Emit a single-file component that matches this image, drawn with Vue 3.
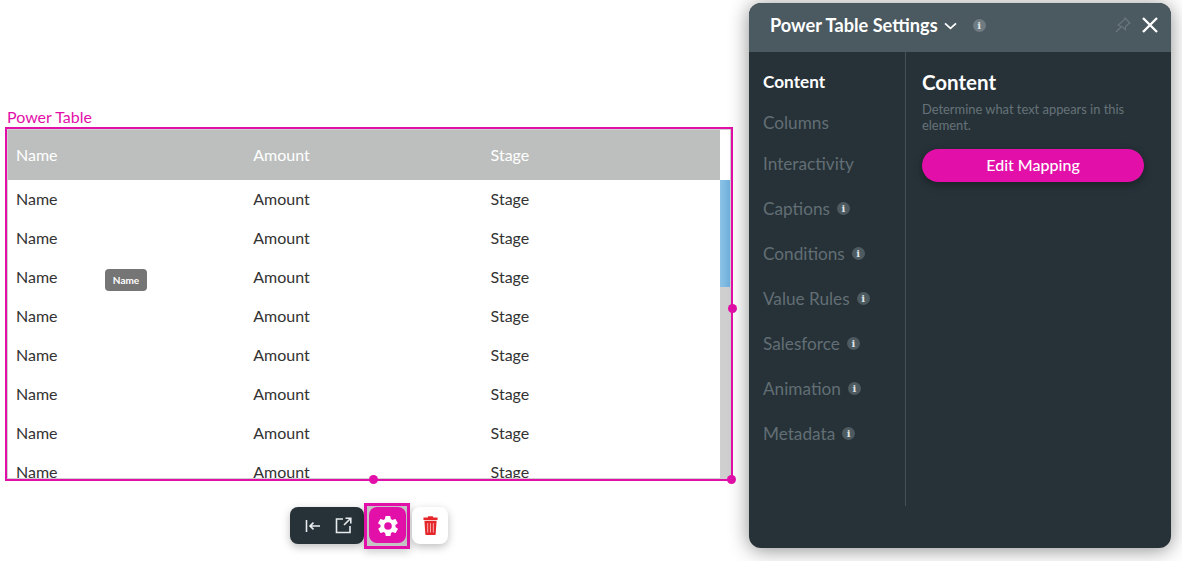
<script setup>
const rows = Array.from({ length: 8 })
const nav = [
  { label: 'Columns', info: false, h: 41 },
  { label: 'Interactivity', info: false, h: 41 },
  { label: 'Captions', info: true, h: 45 },
  { label: 'Conditions', info: true, h: 45 },
  { label: 'Value Rules', info: true, h: 45 },
  { label: 'Salesforce', info: true, h: 45 },
  { label: 'Animation', info: true, h: 45 },
  { label: 'Metadata', info: true, h: 45 },
]
</script>

<template>
  <div class="canvas">
    <div class="element">
      <div class="element-label">Power Table</div>
      <div class="frame">
        <div class="table-area">
          <div class="thead">
            <span class="cell">Name</span><span class="cell">Amount</span><span class="cell">Stage</span>
          </div>
          <div class="tbody">
            <div v-for="(r, i) in rows" :key="i" class="row">
              <span class="cell">Name</span><span class="cell">Amount</span><span class="cell">Stage</span>
            </div>
          </div>
        </div>
        <div class="scroll">
          <div class="scroll-gap"></div>
          <div class="scroll-track"><div class="scroll-thumb"></div></div>
        </div>
        <span class="tip">Name</span>
      </div>
      <span class="handle h-right"></span>
      <span class="handle h-bottom"></span>
      <span class="handle h-corner"></span>
    </div>

    <div class="toolbar">
      <div class="tool-dark">
        <svg width="16" height="14" viewBox="0 0 16 14" fill="none" stroke="#e8ecee" stroke-width="1.6">
          <path d="M1.5 1v12M15 7H5M8.500 3.700 5 7l3.500 3.300" />
        </svg>
        <svg width="17" height="17" viewBox="0 0 17 17" fill="none" stroke="#e8ecee" stroke-width="1.6">
          <path d="M8 2H1.500v13.500H15V9M9 8l6.500-6.500M10.500 1.200h5.300v5.300" />
        </svg>
      </div>
      <div class="tool-gear-wrap">
        <div class="tool-gear">
          <svg class="gear" width="24" height="24" viewBox="0 0 24 24" fill="#fff">
            <path fill-rule="evenodd" d="M19.400 13c.1-.3.100-.7.100-1s0-.7-.1-1l2.100-1.600c.2-.2.200-.4.100-.6l-2-3.500c-.1-.2-.4-.3-.6-.2l-2.500 1c-.5-.4-1.100-.7-1.700-1l-.4-2.700c0-.2-.3-.4-.5-.4h-4c-.2 0-.5.200-.5.400l-.4 2.700c-.6.300-1.200.6-1.700 1l-2.500-1c-.2-.1-.5 0-.6.200l-2 3.500c-.1.200-.1.400.1.600L4.600 11c-.1.300-.1.700-.1 1s0 .7.100 1l-2.100 1.600c-.2.200-.2.400-.1.600l2 3.500c.1.200.4.300.6.200l2.500-1c.5.400 1.100.7 1.700 1l.4 2.700c0 .2.300.4.500.4h4c.2 0 .5-.2.500-.4l.4-2.700c.6-.3 1.200-.6 1.700-1l2.500 1c.2.100.5 0 .6-.2l2-3.500c.1-.2.100-.4-.1-.6L19.400 13zM12 15.800a3.800 3.800 0 1 1 0-7.600 3.800 3.800 0 0 1 0 7.600z" />
          </svg>
        </div>
      </div>
      <div class="tool-trash">
        <svg width="15" height="19" viewBox="0 0 16 20">
          <path fill="#e5262b" d="M5.500 0h5l.5 1.500h4.500V4H.5V1.500H5zM1.500 5h13l-1 14.200c0 .5-.4.800-.9.800H3.400c-.5 0-.9-.3-.9-.8z" />
          <path stroke="#f7b5b5" stroke-width="1" d="M5 7.500v10M8 7.500v10M11 7.500v10" />
        </svg>
      </div>
    </div>

    <aside class="panel">
      <header class="panel-head">
        <span class="panel-title">Power Table Settings</span>
        <svg class="chev" width="13" height="8" viewBox="0 0 13 8" fill="none" stroke="#fff" stroke-width="1.800"><path d="M1 1.300l5.500 5 5.500-5" /></svg>
        <span class="info head-info">i</span>
        <span class="head-spacer"></span>
        <svg class="pin" width="16" height="16" viewBox="0 0 16 16" fill="none" stroke="#6a777d" stroke-width="1.200">
          <path d="M10 1l5 5-1.300.5-3 3-.4 3.200L7.800 10.200 3.300 8.200l-.1-.1L6.500 5.300l3-3zM6 10l-5 5" />
        </svg>
        <svg class="close" width="16" height="16" viewBox="0 0 16 16" fill="none" stroke="#fff" stroke-width="2.400"><path d="M1 1l14 14M15 1L1 15" /></svg>
      </header>
      <div class="panel-body">
        <nav class="side">
          <div class="nav-active">Content</div>
          <div v-for="n in nav" :key="n.label" class="nav-item" :style="{ height: n.h + 'px' }">
            <span>{{ n.label }}</span>
            <span v-if="n.info" class="info">i</span>
          </div>
        </nav>
        <section class="main">
          <h2>Content</h2>
          <p>Determine what text appears in this element.</p>
          <button class="btn">Edit Mapping</button>
        </section>
      </div>
    </aside>
  </div>
</template>

<style>
html, body { margin: 0; background: #fff; overflow: hidden; }
</style>

<style scoped>
.canvas {
  position: relative;
  width: 1182px;
  height: 561px;
  overflow: hidden;
  background: #fff;
  font-family: Lato, sans-serif;
}
.element {
  position: absolute;
  left: 5px;
  top: 127px;
  width: 728px;
  height: 354px;
}
.element-label {
  position: absolute;
  left: 2px;
  top: -20px;
  color: #e30fa9;
  font-size: 16px;
  line-height: 19px;
}
.frame {
  box-sizing: border-box;
  width: 100%;
  height: 100%;
  border: 2px solid #e30fa9;
  display: flex;
  position: relative;
  overflow: hidden;
  padding: 1px;
  box-shadow: inset 0 0 0 1px #cfcfcf;
}
.table-area {
  width: 712px;
  overflow: hidden;
}
.thead {
  height: 50px;
  padding-bottom: 2px;
  box-sizing: border-box;
  background: #bdbfbe;
  color: #fff;
  display: flex;
  align-items: center;
}
.cell {
  width: 237.300px;
  padding-left: 8px;
  box-sizing: border-box;
  flex: none;
  font-size: 16px;
}
.tbody {
  color: #333;
}
.row {
  height: 39px;
  display: flex;
  align-items: center;
  padding-bottom: 2px;
  box-sizing: border-box;
}
.scroll {
  width: 10px;
  display: flex;
  flex-direction: column;
}
.scroll-gap {
  height: 50px;
  flex: none;
}
.scroll-track {
  flex: 1;
  background: #cfcfcf;
}
.scroll-thumb {
  height: 107px;
  background: linear-gradient(90deg, #8cc2e6, #6fb0dc);
}
.tip {
  position: absolute;
  left: 98px;
  top: 140px;
  width: 42px;
  height: 22px;
  border-radius: 4px;
  background: #757575;
  color: #fff;
  font-size: 10px;
  font-weight: 700;
  line-height: 23px;
  text-align: center;
}
.handle {
  position: absolute;
  width: 9px;
  height: 9px;
  border-radius: 50%;
  background: #e30fa9;
}
.h-right { left: 723px; top: 177px; }
.h-bottom { left: 364px; top: 348px; }
.h-corner { left: 722px; top: 348px; }

.toolbar {
  position: absolute;
  left: 290px;
  top: 503px;
  display: flex;
  align-items: flex-start;
}
.tool-dark {
  width: 74px;
  height: 37px;
  margin-top: 4px;
  background: #263238;
  border-radius: 8px;
  display: flex;
  align-items: center;
  justify-content: center;
  gap: 14px;
  box-sizing: border-box;
  padding-left: 3px;
  box-shadow: 0 3px 8px rgba(0, 0, 0, .25);
}
.tool-gear-wrap {
  box-sizing: border-box;
  width: 46px;
  height: 46px;
  border: 3px solid #e30fa9;
  background: #c4c4c4;
  padding: 1px 2px 2px;
  box-shadow: 0 3px 8px rgba(0, 0, 0, .2);
}
.tool-gear {
  width: 37px;
  height: 36px;
  border-radius: 8px;
  background: #e30fa9;
  display: flex;
  align-items: center;
  justify-content: center;
}
.gear { margin-top: 1px; }
.tool-trash {
  width: 36px;
  height: 37px;
  margin: 4px 0 0 2px;
  background: #fff;
  border-radius: 8px;
  display: flex;
  align-items: center;
  justify-content: center;
  box-shadow: 0 3px 8px rgba(0, 0, 0, .25);
}

.panel {
  position: absolute;
  left: 749px;
  top: 3px;
  width: 422px;
  height: 545px;
  border-radius: 12px;
  background: #263238;
  overflow: hidden;
  box-shadow: 0 2px 20px rgba(0, 0, 0, .45);
  display: flex;
  flex-direction: column;
}
.panel-head {
  height: 49px;
  flex: none;
  background: #4b5960;
  display: flex;
  align-items: center;
  padding: 0 13px 5px 21px;
  box-sizing: border-box;
}
.panel-title {
  color: #fff;
  font-size: 18.200px;
  font-weight: 700;
}
.chev { margin-left: 6px; margin-top: 1px; }
.info {
  display: inline-block;
  width: 13px;
  height: 13px;
  border-radius: 50%;
  background: #4d5a60;
  color: #dfe3e5;
  font-family: "DejaVu Serif", serif;
  font-size: 10px;
  font-weight: 700;
  line-height: 13px;
  text-align: center;
  flex: none;
}
.head-info { margin-left: 16px; background: #6f7b81; }
.head-spacer { flex: 1; }
.pin { margin-right: 11px; }
.panel-body {
  flex: 1;
  display: flex;
  padding-bottom: 42px;
}
.side {
  width: 157px;
  flex: none;
  box-sizing: border-box;
  border-right: 1px solid #465157;
  padding: 9px 0 0 14px;
}
.nav-active {
  color: #fff;
  font-size: 17.200px;
  font-weight: 700;
  height: 41px;
  line-height: 41px;
}
.nav-item {
  color: #626e74;
  font-size: 17.200px;
  display: flex;
  align-items: center;
  gap: 7px;
}
.nav-item:nth-child(4) { margin-top: 2px; }
.main {
  flex: 1;
  padding: 15px 27px 0 16px;
}
.main h2 {
  margin: 0;
  color: #fff;
  font-size: 20.500px;
  font-weight: 700;
  line-height: 30px;
}
.main p {
  margin: 4px 0 0;
  color: #667278;
  font-size: 12.900px;
  line-height: 16px;
}
.btn {
  display: block;
  margin-top: 16px;
  width: 222px;
  height: 33px;
  padding: 0 0 2px;
  border: none;
  border-radius: 17px;
  background: #e30fa9;
  color: #fff;
  font-family: Lato, sans-serif;
  font-size: 16px;
  font-weight: 500;
  box-shadow: 0 3px 8px rgba(0, 0, 0, .35);
}
</style>
